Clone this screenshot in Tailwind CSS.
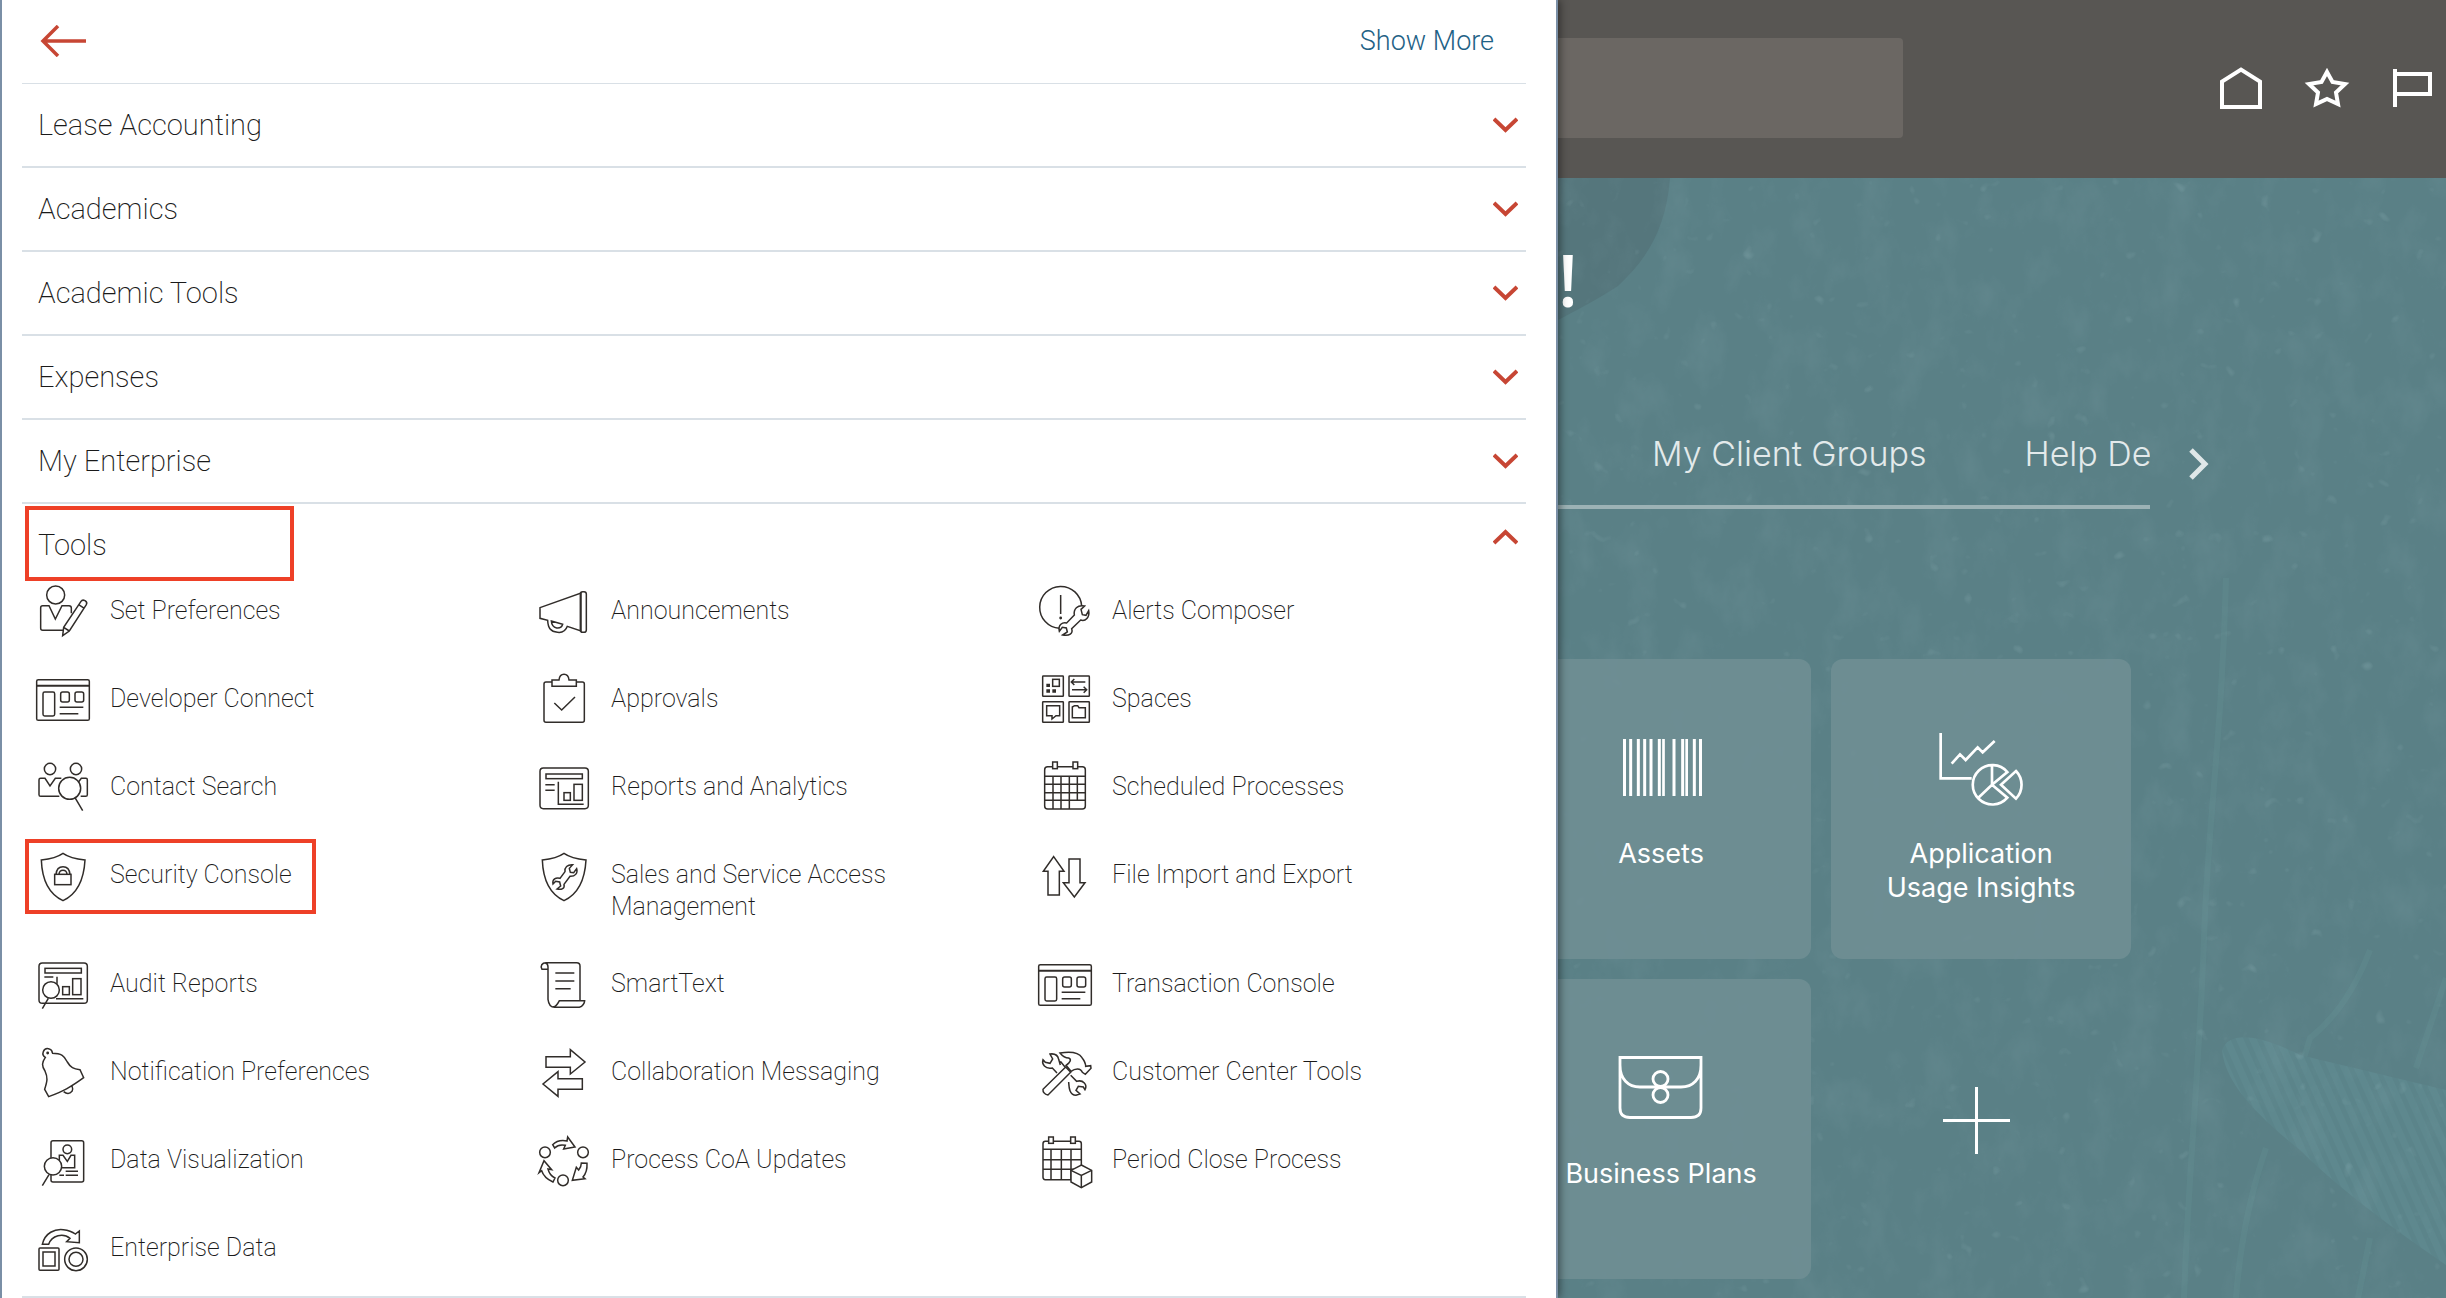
<!DOCTYPE html>
<html lang="en">
<head>
<meta charset="utf-8">
<title>Navigator</title>
<script src="https://cdn.jsdelivr.net/npm/@tailwindcss/browser@4"></script>
</head>
<body class="flex min-h-screen overflow-x-hidden bg-[#5a8086] font-['Roboto',sans-serif]">

<!-- Navigator drawer -->
<aside class="relative z-10 w-[63.7%] shrink-0 border-x-2 border-[#7a8fa6] bg-white font-extralight text-[#1a1a1a] shadow-[2px_0_8px_rgba(0,0,0,0.45)]">
  <div class="mr-[30px] ml-5 flex h-[84px] items-center justify-between border-b border-[#d9e0e6] pr-8 pb-0.5 pl-[18px]">
    <button type="button" aria-label="Back">
      <svg class="h-8 w-[46px]" viewBox="0 0 46 32" fill="none" stroke="#c74634" stroke-width="3.5"><path d="M46 16H3M18 1L3 16L18 31"/></svg>
    </button>
    <a href="#" class="text-[27px] leading-9 font-light text-[#1f6286]">Show More</a>
  </div>

  <nav class="[&_.chev]:h-4 [&_.chev]:w-[25px] [&_.chev]:fill-none [&_.chev]:stroke-[#c74634] [&_.chev]:stroke-[4]">
    <div class="mr-[30px] ml-5 text-[29px] leading-9">
      <button type="button" class="flex h-[84px] w-full items-center justify-between border-b-2 border-[#d9e0e6] pr-2 pl-4"><span>Lease Accounting</span><svg class="chev" viewBox="0 0 25 16"><path d="M1 2L12.500 13L24 2"/></svg></button>
      <button type="button" class="flex h-[84px] w-full items-center justify-between border-b-2 border-[#d9e0e6] pr-2 pl-4"><span>Academics</span><svg class="chev" viewBox="0 0 25 16"><path d="M1 2L12.500 13L24 2"/></svg></button>
      <button type="button" class="flex h-[84px] w-full items-center justify-between border-b-2 border-[#d9e0e6] pr-2 pl-4"><span>Academic Tools</span><svg class="chev" viewBox="0 0 25 16"><path d="M1 2L12.500 13L24 2"/></svg></button>
      <button type="button" class="flex h-[84px] w-full items-center justify-between border-b-2 border-[#d9e0e6] pr-2 pl-4"><span>Expenses</span><svg class="chev" viewBox="0 0 25 16"><path d="M1 2L12.500 13L24 2"/></svg></button>
      <button type="button" class="flex h-[84px] w-full items-center justify-between border-b-2 border-[#d9e0e6] pr-2 pl-4"><span>My Enterprise</span><svg class="chev" viewBox="0 0 25 16"><path d="M1 2L12.500 13L24 2"/></svg></button>
      <button type="button" aria-expanded="true" class="relative flex h-[82px] w-full items-center justify-between pr-2 pl-4"><span>Tools</span><svg class="chev mb-4" viewBox="0 0 25 16"><path d="M1 14L12.500 3L24 14"/></svg><span class="absolute top-0.5 left-[3px] h-[75px] w-[269px] border-4 border-[#ee4027]"></span></button>
    </div>

    <ul class="grid grid-cols-3 gap-y-9 pr-[17px] pb-[21px] pl-[34px] text-[25px] leading-8 [&_a]:flex [&_a]:items-start [&_a]:gap-5 [&_a_span]:max-w-[320px] [&_a_span]:pt-[9px] [&_.ico]:h-[52px] [&_.ico]:w-[54px] [&_.ico]:shrink-0 [&_.ico]:overflow-visible [&_.ico]:fill-none [&_.ico]:stroke-[#312d2a] [&_.ico]:stroke-[4.5]">
      <li><a href="#">
        <svg class="ico" viewBox="48 48 162 156"><circle cx="107" cy="75" r="27"/><path d="M130 181H68q-6 0-6-6V113q0-6 6-6H87L106 147L126 107H147q7 0 7 7V130"/><path d="M128 197L131 172L183 94q4-6 12-2q8 5 4 12L148 183ZM131 172l17 11M176 104l17 11"/></svg>
        <span>Set Preferences</span></a></li>
      <li><a href="#">
        <svg class="ico" viewBox="51 48 162 156"><path d="M60 113L183 69V183L142 169C136 185 125 189 112 187C92 185 84 175 83 151L60 145Z"/><rect x="181" y="65" width="18" height="122" rx="7"/><path d="M94 153L128 163Q124 176 110 174Q95 170 94 153Z"/></svg>
        <span>Announcements</span></a></li>
      <li><a href="#">
        <svg class="ico" viewBox="54 48 162 156"><path d="M185 108A63 63 0 1 0 118 175M122 75V132"/><circle cx="122" cy="144" r="2"/><path d="M163 135C160 118 172 103 194 108L183 118L187 134L198 136L206 122C210 142 196 155 182 150L155 176C160 190 148 199 128 195L142 186L139 174L127 172L118 184C113 165 128 155 140 159Z"/></svg>
        <span>Alerts Composer</span></a></li>

      <li><a href="#">
        <svg class="ico" viewBox="48 312 162 156"><rect x="50" y="329" width="158" height="122" rx="5"/><path d="M50 347H208" stroke-width="6"/><rect x="69" y="366" width="35" height="72" rx="5"/><rect x="122" y="366" width="26" height="30" rx="6"/><rect x="165" y="366" width="26" height="30" rx="6"/><path d="M119 412H190M119 431H175"/></svg>
        <span>Developer Connect</span></a></li>
      <li><a href="#">
        <svg class="ico" viewBox="51 312 162 156"><path d="M96 336H78q-6 0-6 6V451q0 6 6 6H187q6 0 6-6V342q0-6-6-6H169"/><path d="M96 330H117q2-17 15-17t15 17H169V349H96ZM103 399L125 420L165 381"/></svg>
        <span>Approvals</span></a></li>
      <li><a href="#">
        <svg class="ico" viewBox="54 312 162 156"><rect x="68" y="318" width="62" height="61" rx="2"/><rect x="147" y="318" width="61" height="61" rx="2"/><rect x="68" y="395" width="62" height="62" rx="2"/><rect x="147" y="395" width="61" height="62" rx="2"/><rect x="98" y="328" width="20" height="21"/><path d="M79 346H90M79 363H90M97 363H108" stroke-width="10"/><path d="M196 336H155M163 327L154 336L163 345M156 359H199M191 350L200 359L191 368M80 407H119V437H108L96 447V437H80ZM157 411L164 407H173L177 413H196V443H157Z"/></svg>
        <span>Spaces</span></a></li>

      <li><a href="#">
        <svg class="ico" viewBox="48 576 162 156"><circle cx="90" cy="597" r="17"/><circle cx="168" cy="597" r="17"/><path d="M118 679H62q-5 0-5-5V629q0-4 5-4H75L90 648L106 625H124M176 635L184 625H198q4 0 4 4V674q0 5-5 5H182M165 683L188 722"/><circle cx="149" cy="655" r="33"/></svg>
        <span>Contact Search</span></a></li>
      <li><a href="#">
        <svg class="ico" viewBox="51 576 162 156"><rect x="60" y="594" width="145" height="122" rx="10"/><rect x="78" y="612" width="109" height="14"/><path d="M76 644H104M76 661H104M115 635V703H191"/><rect x="132" y="668" width="19" height="23"/><rect x="162" y="643" width="25" height="48"/></svg>
        <span>Reports and Analytics</span></a></li>
      <li><a href="#">
        <svg class="ico" viewBox="54 576 162 156"><rect x="74" y="590" width="122" height="127" rx="9"/><rect x="98" y="576" width="14" height="20" fill="#fff"/><rect x="159" y="576" width="14" height="20" fill="#fff"/><path d="M74 619H196M74 643H196M74 668H196M74 691H196M99 619V717M123 619V717M148 619V717M172 619V691"/></svg>
        <span>Scheduled Processes</span></a></li>

      <li class="relative"><a href="#">
        <svg class="ico" viewBox="48 840 162 156"><path d="M129 850C112 862 92 867 64 870C66 925 82 970 129 992C176 970 192 925 195 870C166 867 146 862 129 850Z"/><rect x="104" y="913" width="49" height="31"/><path d="M108 913q2-23 21-23t21 23M117 913q1-12 12-12t12 12"/></svg>
        <span>Security Console</span></a>
        <div class="pointer-events-none absolute -top-[11px] -left-[11px] h-[75px] w-[291px] border-4 border-[#ee4027]"></div></li>
      <li><a href="#">
        <svg class="ico" viewBox="51 840 162 156"><path d="M132 850C115 862 95 867 67 870C69 925 85 970 132 992C179 970 195 925 198 870C169 867 149 862 132 850Z"/><path d="M135 905C133 893 142 883 158 884L148 895L151 907L161 908L170 896C174 910 165 920 150 919L132 943C135 955 125 960 111 957L122 948L119 936L107 934L99 942C96 928 108 921 120 925Z"/></svg>
        <span>Sales and Service Access Management</span></a></li>
      <li><a href="#">
        <svg class="ico" viewBox="54 840 162 156"><path d="M101 860L132 904H118V975H84V904H70ZM147 867H180V938H195L163 981L130 938H147Z"/></svg>
        <span>File Import and Export</span></a></li>

      <li><a href="#">
        <svg class="ico" viewBox="48 84 162 156"><rect x="57" y="96" width="145" height="121" rx="10"/><rect x="75" y="112" width="109" height="14"/><path d="M73 138H100M111 137V158M108 203H190M85 202L67 233"/><rect x="128" y="167" width="20" height="24"/><rect x="158" y="143" width="25" height="48"/><circle cx="93" cy="177" r="25" fill="#fff"/></svg>
        <span>Audit Reports</span></a></li>
      <li><a href="#">
        <svg class="ico" viewBox="51 84 162 156"><path d="M84 115H66C60 105 66 95 78 95H170q10 0 10 10V209M76 96q8 2 8 12V205C86 222 92 229 104 229H178C188 227 194 215 194 209H118C112 220 108 228 98 228M106 126H163M106 150H163M106 173H152"/></svg>
        <span>SmartText</span></a></li>
      <li><a href="#">
        <svg class="ico" viewBox="54 84 162 156"><rect x="56" y="101" width="158" height="122" rx="5"/><path d="M56 119H214" stroke-width="6"/><rect x="75" y="138" width="35" height="72" rx="5"/><rect x="128" y="138" width="26" height="30" rx="6"/><rect x="171" y="138" width="26" height="30" rx="6"/><path d="M125 184H196M125 203H181"/></svg>
        <span>Transaction Console</span></a></li>

      <li><a href="#">
        <svg class="ico" viewBox="48 348 162 156"><path d="M96 367C125 367 133 375 142 393C152 410 160 414 180 416L191 440C150 470 130 480 86 497L74 475C82 450 84 440 75 420C65 405 65 395 76 379A14 14 0 1 1 97 367M131 482Q145 494 156 481Q160 474 156 465"/><circle cx="83" cy="366" r="2"/></svg>
        <span>Notification Preferences</span></a></li>
      <li><a href="#">
        <svg class="ico" viewBox="51 348 162 156"><path d="M78 377H151V356L195 393L151 429V409H78ZM187 443V475H114V496L69 459L114 422V443Z"/></svg>
        <span>Collaboration Messaging</span></a></li>
      <li><a href="#">
        <svg class="ico" viewBox="54 348 162 156"><path d="M121 402L116 385C114 374 106 367 90 369L98 384L90 397L76 394L69 386C65 400 75 415 97 411L111 426M121 391L135 408M146 453C147 470 148 492 168 493L180 489L168 478L175 466L190 468L195 476C203 462 190 445 170 451L152 433"/><path d="M120 366C145 362 175 362 186 380C194 390 197 400 197 406L212 404L213 412L196 430L187 424C182 410 165 412 153 421L138 403C152 393 155 385 146 381C138 381 128 376 120 366Z"/><path d="M137 408L69 475Q68 488 84 492L152 424Z"/></svg>
        <span>Customer Center Tools</span></a></li>

      <li><a href="#">
        <svg class="ico" viewBox="48 612 162 156"><rect x="93" y="629" width="98" height="124" rx="6"/><circle cx="142" cy="655" r="13"/><path d="M118 690V673H129L142 691L153 673H164V710H118M137 721H174M118 733H132M137 733H174M87 731L67 764"/><circle cx="99" cy="706" r="26" fill="#fff"/></svg>
        <span>Data Visualization</span></a></li>
      <li><a href="#">
        <svg class="ico" viewBox="51 612 162 156"><circle cx="75" cy="664" r="16"/><circle cx="189" cy="664" r="16"/><circle cx="129" cy="748" r="16"/><path d="M98 641C110 629 126 627 141 630L143 618L165 648L131 654L136 643C124 640 112 643 104 651ZM201 697C202 715 198 728 189 738L195 743L157 748L169 709L176 717C181 711 184 704 184 696ZM105 741L99 753C82 745 70 735 65 719L57 725L72 689L95 716L84 714C87 726 94 736 105 741Z"/></svg>
        <span>Process CoA Updates</span></a></li>
      <li><a href="#">
        <svg class="ico" viewBox="54 612 162 156"><rect x="69" y="631" width="115" height="115" rx="7"/><rect x="86" y="618" width="14" height="19" fill="#fff"/><rect x="152" y="618" width="14" height="19" fill="#fff"/><path d="M69 655H184M69 686H184M69 715H184M93 655V746M124 655V746M153 655V746"/><path d="M184 702L215 718V753L184 770L153 753V718Z" fill="#fff"/><path d="M153 718L184 733L215 718M184 733V770"/></svg>
        <span>Period Close Process</span></a></li>

      <li><a href="#">
        <svg class="ico" viewBox="48 876 162 156"><path d="M67 940C75 905 105 893 130 896C148 898 158 903 166 909L178 900V935L140 932L150 922C130 905 95 912 86 940Z"/><rect x="57" y="951" width="60" height="67" rx="3"/><rect x="69" y="963" width="36" height="42"/><circle cx="168" cy="985" r="34"/><circle cx="168" cy="985" r="21"/></svg>
        <span>Enterprise Data</span></a></li>
    </ul>
    <div class="mr-[30px] ml-5 border-b-2 border-[#d9e0e6]"></div>
  </nav>
</aside>

<!-- Home page behind the drawer -->
<div class="flex min-w-0 flex-1 flex-col overflow-hidden font-['Inter',sans-serif] text-white">
  <header class="flex h-[178px] items-center justify-between bg-[#585653] pr-3.5 pb-0.5">
    <input type="text" aria-label="Search" class="h-[100px] w-[345px] rounded-r bg-[#6b6763]">
    <div class="flex items-center gap-[42px] [&_svg]:h-11 [&_svg]:fill-none [&_svg]:stroke-white [&_svg]:stroke-[4]">
      <button type="button" aria-label="Home"><svg class="w-[42px]" viewBox="0 0 42 44"><path d="M2 41V15.500L21 3.500L40 15.500V41Z"/></svg></button>
      <button type="button" aria-label="Favorites"><svg class="w-[46px]" viewBox="0 0 46 44"><path d="M23 6L28.500 16L41 18L32 26.500L34 38L23 33L12 38L14 26.500L5 18L17.500 16Z"/></svg></button>
      <button type="button" aria-label="Watchlist"><svg class="w-10" viewBox="0 0 40 44"><path d="M3 3V41M3 8H38V28H3"/></svg></button>
    </div>
  </header>

  <main class="relative flex-1 pt-[65px]">
    <svg class="absolute inset-0 h-full w-full" viewBox="0 0 888 1120" preserveAspectRatio="xMinYMin slice" aria-hidden="true">
      <defs>
        <filter id="mottle" x="0" y="0" width="100%" height="100%"><feTurbulence type="fractalNoise" baseFrequency="0.03 0.02" numOctaves="4" seed="4"/><feColorMatrix values="0 0 0 0 0.27  0 0 0 0 0.42  0 0 0 0 0.46  1.6 0 0 0 -0.72"/></filter>
        <filter id="specks" x="0" y="0" width="100%" height="100%"><feTurbulence type="fractalNoise" baseFrequency="0.06" numOctaves="2" seed="11"/><feColorMatrix values="0 0 0 0 0.47  0 0 0 0 0.67  0 0 0 0 0.7  4 0 0 0 -2.9"/></filter>
        <pattern id="veins" width="12" height="12" patternUnits="userSpaceOnUse" patternTransform="rotate(-24)"><rect width="12" height="12" fill="#5e888e"/><rect width="5" height="12" fill="#5b848a"/></pattern>
      </defs>
      <path d="M0 0H112C108 50 90 80 60 108C35 124 15 134 0 142Z" fill="#55767c"/>
      <g fill="none" stroke="#5f888e" stroke-width="6" opacity="0.6"><path d="M668 400C664 560 650 640 646 760S630 1000 626 1120M812 772Q790 830 752 860L746 880M888 800L858 890M708 970Q684 1040 678 1120M812 1060L800 1120"/></g>
      <path d="M664 872C672 852 702 857 742 877L888 912V1087C822 1042 772 1002 742 972C692 932 667 902 664 872Z" fill="url(#veins)"/>
      <rect width="888" height="1120" filter="url(#mottle)" opacity="0.18"/>
      <rect width="888" height="1120" filter="url(#specks)" opacity="0.2"/>
    </svg>

    <div class="relative">
      <h1 class="font-['Open_Sans',sans-serif] text-[72px] leading-[72px] font-semibold">!</h1>
      <div class="mt-[117px] flex items-start gap-[39px]">
        <nav class="flex w-2/3 gap-[98px] overflow-hidden border-b-4 border-[#9cb2b5] pb-[29px] pl-[94px] text-[34px] leading-[44px] font-light whitespace-nowrap text-[#e3eaeb]">
          <a href="#">My Client Groups</a>
          <a href="#">Help De</a>
        </nav>
        <button type="button" aria-label="Next" class="pt-4"><svg class="h-8 w-5 fill-none stroke-[#dfe7e8] stroke-[5]" viewBox="0 0 20 32"><path d="M2 2L16 16L2 30"/></svg></button>
      </div>

      <ul class="-ml-[47px] mt-[150px] grid grid-cols-[300px_300px] gap-5 text-center text-[27px] leading-[34px] [&_a]:flex [&_a]:h-[300px] [&_a]:flex-col [&_a]:items-center [&_a]:gap-[30px] [&_a]:rounded-xl [&_a]:bg-[#6f8e94]/90 [&_a]:pt-[68px] [&_a_svg]:h-20 [&_a_svg]:w-[90px] [&_a_svg]:fill-none [&_a_svg]:stroke-white">
        <li><a href="#">
          <svg viewBox="48 21 270 240" stroke-width="9"><path d="M73.500 57V228M92 57V228M115 57V228M134 57V228M153 57V228M178 57V228M222 57V228M248 57V228M283 57V228M301.500 57V228"/><path stroke-width="8" d="M190.500 57V228M260 57V228"/></svg>
          <span>Assets</span></a></li>
        <li><a href="#">
          <svg viewBox="1008 21 270 240" stroke-width="8"><path d="M1022 39V175H1115M1055 131L1080 103L1097 120L1133 82L1148 97L1184 63M1176 134V194M1176 194L1222 156A59 59 0 1 0 1222 233L1176 194L1135 233M1203 194L1248 153A60 60 0 0 1 1248 236Z"/></svg>
          <span>Application<br>Usage Insights</span></a></li>
        <li><a href="#">
          <svg viewBox="0 0 90 80" stroke-width="2.800"><path d="M4 10.500H85V61Q85 70.500 75 70.500H14Q4 70.500 4 61ZM4 18C4 32 12 40 24 40H65C77 40 85 32 85 18"/><circle cx="44.500" cy="32" r="7.500"/><circle cx="44.500" cy="48" r="7.500"/></svg>
          <span>Business Plans</span></a></li>
        <li class="flex items-center justify-center pr-2.5 pb-[18px]">
          <button type="button" aria-label="Add"><svg class="h-[67px] w-[67px] fill-none stroke-white stroke-[3]" viewBox="0 0 67 67"><path d="M33.500 0V67M0 33.500H67"/></svg></button></li>
      </ul>
    </div>
  </main>
</div>
</body>
</html>
